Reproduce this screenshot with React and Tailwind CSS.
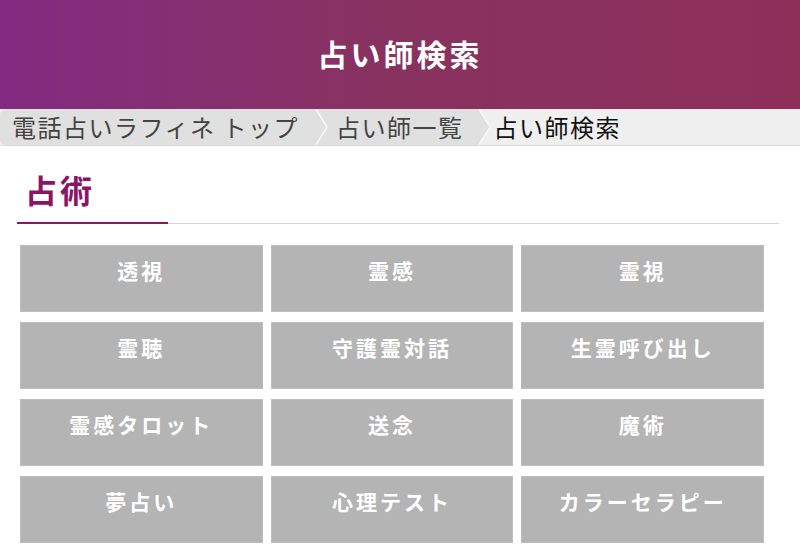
import React from "react";

const jp = { fontFamily: '"Noto Sans CJK JP", "Noto Sans", sans-serif' };

const items = [
  "透視", "霊感", "霊視",
  "霊聴", "守護霊対話", "生霊呼び出し",
  "霊感タロット", "送念", "魔術",
  "夢占い", "心理テスト", "カラーセラピー",
];

function Chevron({ left, right }) {
  return (
    <svg width="14" height="36" viewBox="0 0 14 36" className="block shrink-0">
      <rect x="0" y="0" width="14" height="36" fill={right} />
      <polygon points="0,0 2,0 13,18 2,36 0,36" fill={left} />
      <polyline points="2,0 13,18 2,36" fill="none" stroke="#f7f7f7" strokeWidth="1.5" />
    </svg>
  );
}

export default function App() {
  return (
    <div className="w-[800px] h-[547px] overflow-hidden bg-white" style={jp}>
      <header className="h-[109px] flex items-center justify-center bg-gradient-to-r from-[#852a82] via-[#88325f] to-[#8e2f5a]">
        <h1 className="text-white text-[30px] font-bold tracking-[3px] leading-none pb-[3px]">占い師検索</h1>
      </header>
      <nav className="h-[37px] flex items-stretch bg-[#efefef] border-b border-[#dcdcdc] text-[24px] tracking-[1.5px] leading-none">
        <div className="flex items-center bg-[#e0e0e0] rounded-l-[6px] pl-[12px] pr-[15px] text-[#444]">電話占いラフィネ トップ</div>
        <Chevron left="#e0e0e0" right="#e0e0e0" />
        <div className="flex items-center bg-[#e0e0e0] pl-[8px] pr-[14px] text-[#444]">占い師一覧</div>
        <Chevron left="#e0e0e0" right="#efefef" />
        <div className="flex items-center pl-[2px] text-[#111]">占い師検索</div>
      </nav>
      <section className="ml-[17px] w-[762px] mt-[27px] relative">
        <h2 className="text-[32px] font-bold text-[#8a1466] tracking-[3px] leading-none pl-[8px] pb-[18px]">占術</h2>
        <div className="h-[1px] bg-[#d4d4d4] relative">
          <div className="absolute left-0 top-[-1px] h-[2px] w-[151px] bg-[#86195f]" />
        </div>
      </section>
      <div className="ml-[20px] w-[744px] mt-[21px] grid grid-cols-3 gap-x-[8px] gap-y-[10px]">
        {items.map((t) => (
          <div
            key={t}
            className="h-[67px] bg-[#b4b4b4] border border-[#bdbdbd] text-white font-bold text-[21px] tracking-[3px] leading-none flex justify-center pt-[14px]"
          >
            {t}
          </div>
        ))}
      </div>
    </div>
  );
}
